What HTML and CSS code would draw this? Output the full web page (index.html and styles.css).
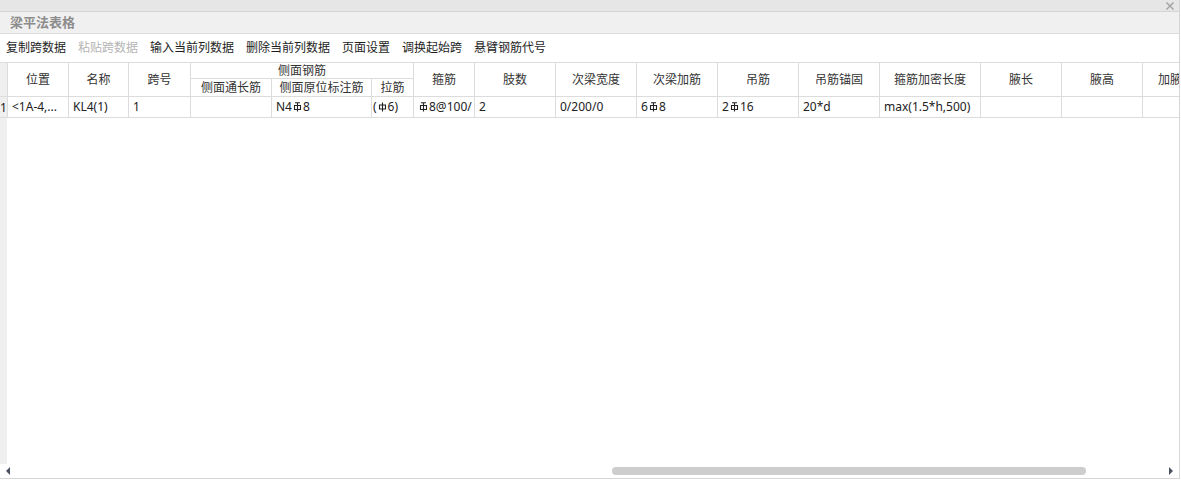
FILE: index.html
```html
<!DOCTYPE html>
<html lang="zh">
<head>
<meta charset="utf-8">
<title>梁平法表格</title>
<link rel="stylesheet" href="styles.css">
</head>
<body>
<div class="window">
  <div class="topbar">
    <svg class="close" width="8" height="8" viewBox="0 0 8 8"><path d="M0.5 0.5L7.5 7.5M7.5 0.5L0.5 7.5" stroke="#a0a0a0" stroke-width="1.4" fill="none"/></svg>
  </div>
  <div class="title">梁平法表格</div>
  <div class="toolbar">
    <span class="tool">复制跨数据</span>
    <span class="tool disabled">粘贴跨数据</span>
    <span class="tool">输入当前列数据</span>
    <span class="tool">删除当前列数据</span>
    <span class="tool">页面设置</span>
    <span class="tool">调换起始跨</span>
    <span class="tool">悬臂钢筋代号</span>
  </div>
  <div class="table-area">
    <div class="sheet">
      <div class="cell gutter h2"></div>
      <div class="cell head h2">位置</div>
      <div class="cell head h2">名称</div>
      <div class="cell head h2">跨号</div>
      <div class="cell head group">侧面钢筋</div>
      <div class="cell head h2">箍筋</div>
      <div class="cell head h2">肢数</div>
      <div class="cell head h2">次梁宽度</div>
      <div class="cell head h2">次梁加筋</div>
      <div class="cell head h2">吊筋</div>
      <div class="cell head h2">吊筋锚固</div>
      <div class="cell head h2">箍筋加密长度</div>
      <div class="cell head h2">腋长</div>
      <div class="cell head h2">腋高</div>
      <div class="cell head h2 clip">加腋</div>
      <div class="cell head sub">侧面通长筋</div>
      <div class="cell head sub">侧面原位标注筋</div>
      <div class="cell head sub">拉筋</div>

      <div class="cell gutter num">1</div>
      <div class="cell data">&lt;1A-4,...</div>
      <div class="cell data">KL4(1)</div>
      <div class="cell data">1</div>
      <div class="cell data"></div>
      <div class="cell data">N4<svg class="rebar" width="9" height="10" viewBox="0 0 9 10"><path d="M2 0.8H7M4.5 0.8V9.5M1.5 3.5H7.5V7.5H1.5Z" stroke="currentColor" stroke-width="1.1" fill="none"/></svg>8</div>
      <div class="cell data tight">(<svg class="rebar" width="9" height="10" viewBox="0 0 9 10"><path d="M4.5 0.5V9.5M1.5 3H7.5V7H1.5Z" stroke="currentColor" stroke-width="1.1" fill="none"/></svg>6)</div>
      <div class="cell data"><svg class="rebar" width="9" height="10" viewBox="0 0 9 10"><path d="M2 0.8H7M4.5 0.8V9.5M1.5 3.5H7.5V7.5H1.5Z" stroke="currentColor" stroke-width="1.1" fill="none"/></svg>8@100/</div>
      <div class="cell data">2</div>
      <div class="cell data">0/200/0</div>
      <div class="cell data">6<svg class="rebar" width="9" height="10" viewBox="0 0 9 10"><path d="M2 0.8H7M4.5 0.8V9.5M1.5 3.5H7.5V7.5H1.5Z" stroke="currentColor" stroke-width="1.1" fill="none"/></svg>8</div>
      <div class="cell data">2<svg class="rebar" width="9" height="10" viewBox="0 0 9 10"><path d="M2 0.8H7M4.5 0.8V9.5M1.5 3.5H7.5V7.5H1.5Z" stroke="currentColor" stroke-width="1.1" fill="none"/></svg>16</div>
      <div class="cell data">20*d</div>
      <div class="cell data">max(1.5*h,500)</div>
      <div class="cell data"></div>
      <div class="cell data"></div>
      <div class="cell data"></div>
    </div>
  </div>
  <div class="hscroll">
    <span class="arrow left"></span>
    <div class="track"><div class="thumb"></div></div>
    <span class="arrow right"></span>
  </div>
</div>
</body>
</html>
```

FILE: styles.css
```css
* { box-sizing: border-box; }

html, body {
  margin: 0;
  padding: 0;
  background: #ffffff;
}

body {
  font-family: "Noto Sans", "Noto Sans CJK SC", sans-serif;
  font-size: 12px;
  color: #222;
  width: 1181px;
  height: 480px;
  overflow: hidden;
}

.window {
  width: 1180px;
  height: 479px;
  border-right: 1px solid #d6d6d6;
  border-bottom: 1px solid #d6d6d6;
  display: flex;
  flex-direction: column;
  overflow: hidden;
}

.topbar {
  height: 12px;
  background: #e6e6e6;
  border-bottom: 1px solid #d4d4d4;
  display: flex;
  justify-content: flex-end;
  align-items: center;
  padding-right: 5px;
  flex: none;
}

.title {
  height: 22px;
  background: #f0f0f0;
  border-bottom: 1px solid #dcdcdc;
  color: #8c8c8c;
  font-size: 13px;
  font-weight: 700;
  line-height: 21px;
  padding-left: 10px;
  flex: none;
}

.toolbar {
  height: 28px;
  display: flex;
  align-items: center;
  flex: none;
  line-height: 16px;
}

.tool {
  padding: 0 6px;
  color: #1e1e1e;
  white-space: nowrap;
}

.tool.disabled { color: #b4b4b4; }

.table-area {
  height: 402px;
  flex: none;
  overflow: hidden;
  background: linear-gradient(to right, #efefef 7px, #ffffff 7px);
}

.sheet {
  display: grid;
  grid-template-columns: 7px 60px 59px 61px 80px 99px 41px 60px 80px 80px 80px 80px 80px 100px 80px 80px 80px;
  grid-template-rows: 15px 17px 20px;
  gap: 1px;
  padding: 1px 0;
  background: #dcdcdc;
  width: 1223px;
}

.cell {
  background: #ffffff;
  white-space: nowrap;
  overflow: hidden;
  display: flex;
  align-items: center;
}

.gutter { background: #efefef; }

.h2 { grid-row: 1 / 3; }
.group { grid-column: 5 / 8; grid-row: 1; }
.sub { grid-row: 2; }

.head {
  justify-content: center;
  color: #333;
  line-height: 14px;
}

.head.clip {
  justify-content: flex-start;
  padding-left: 15px;
}

.data {
  padding-left: 4px;
  color: #222;
  line-height: 16px;
}

.tight { padding-left: 1px; }

.num {
  justify-content: center;
  color: #222;
  font-size: 12px;
}

.rebar {
  display: inline-block;
  margin: 0 1px;
  flex: none;
}

.hscroll {
  height: 14px;
  flex: none;
  display: flex;
  align-items: center;
  padding: 0 6px;
}

.arrow {
  width: 0;
  height: 0;
  border-top: 4px solid transparent;
  border-bottom: 4px solid transparent;
  flex: none;
}

.arrow.left { border-right: 4px solid #4a5262; }
.arrow.right { border-left: 4px solid #4a5262; }

.track {
  flex: 1;
  height: 8px;
  padding-left: 602px;
  padding-right: 83px;
}

.thumb {
  height: 8px;
  border-radius: 4px;
  background: #cdcdcd;
}
```
